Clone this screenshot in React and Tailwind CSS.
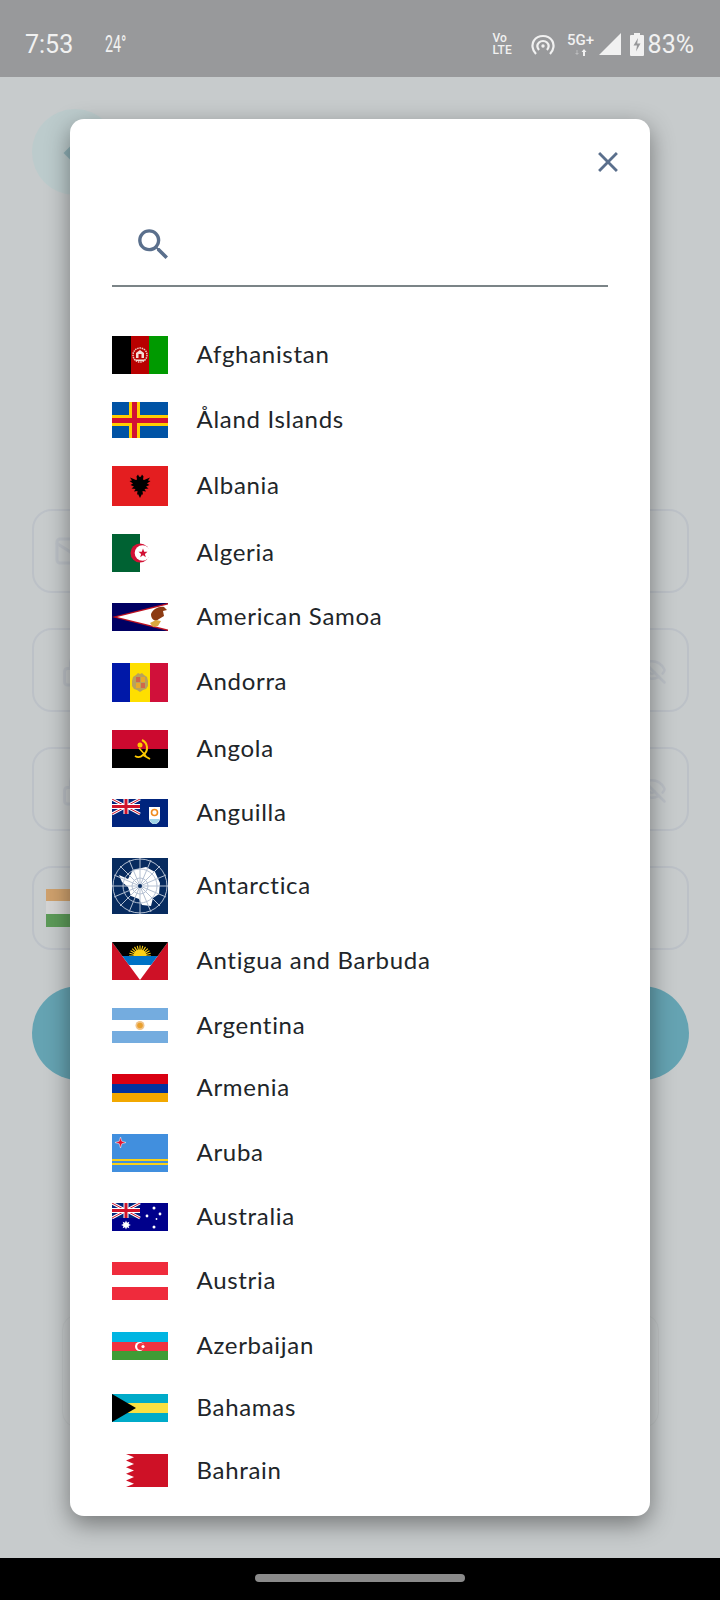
import React from "react";
import { Mail, Lock, EyeOff } from "lucide-react";

function Svg({ w = 56, h, children }) {
  return (
    <svg width={w} height={h} viewBox={`0 0 ${w} ${h}`} className="block shrink-0">
      {children}
    </svg>
  );
}

// union jack drawn in a 28x15 box
function Jack() {
  return (
    <g>
      <rect width="28" height="15" fill="#00247d" />
      <path d="M0 0L28 15M28 0L0 15" stroke="#fff" strokeWidth="3" />
      <path d="M0 0L28 15M28 0L0 15" stroke="#cf142b" strokeWidth="1" />
      <path d="M14 0V15M0 7.5H28" stroke="#fff" strokeWidth="5" />
      <path d="M14 0V15M0 7.5H28" stroke="#cf142b" strokeWidth="3" />
    </g>
  );
}

const sunRays = Array.from({ length: 13 }, (_, i) => {
  const a = (Math.PI * i) / 12;
  return `M28 14L${(28 + Math.cos(a) * 11).toFixed(1)} ${(14 - Math.sin(a) * 10.5).toFixed(1)}`;
}).join("");

const flags = {
  Afghanistan: (
    <Svg h={38}>
      <rect width="19" height="38" fill="#000" />
      <rect x="19" width="18" height="38" fill="#b80000" />
      <rect x="37" width="19" height="38" fill="#009a00" />
      <circle cx="28" cy="19" r="7" fill="none" stroke="#eec9c2" strokeWidth="1.500" strokeDasharray="1.500 .8" />
      <path d="M24 22v-5l4-3 4 3v5z" fill="#f3dcd6" />
      <path d="M26.500 22v-4h3v4z" fill="#b80000" />
      <path d="M23.500 23.500h9v1.500h-9z" fill="#f3dcd6" />
    </Svg>
  ),
  Aland: (
    <Svg h={36}>
      <rect width="56" height="36" fill="#0053a5" />
      <rect x="17" width="11" height="36" fill="#ffce00" />
      <rect y="13" width="56" height="11" fill="#ffce00" />
      <rect x="20" width="5" height="36" fill="#d21034" />
      <rect y="16" width="56" height="5" fill="#d21034" />
    </Svg>
  ),
  Albania: (
    <Svg h={40}>
      <rect width="56" height="40" fill="#e41e20" />
      <path d="M28 32l-2-4-1 1 .5-4-3.500.5 1.500-2.500-4-.5 2.500-2-3.500-1.500 2.500-1.500-3.500-2.500 2.500-.5-2-3 6 2.500 1-.5-.5-3 1.500-2 1 2 1 .5 1-.5 1-2 1.500 2-.5 3 1 .5 6-2.500-2 3 2.500.5-3.500 2.500 2.500 1.500-3.500 1.500 2.500 2-4 .5 1.500 2.500-3.500-.5.5 4-1-1z" fill="#000" />
    </Svg>
  ),
  Algeria: (
    <Svg w={56} h={38}>
      <rect width="28" height="38" fill="#006233" />
      <circle cx="28" cy="19" r="9.500" fill="#d21034" />
      <circle cx="30.500" cy="19" r="7.800" fill="#fff" />
      <path d="M31 14.500l1.200 3.200 3.300.1-2.600 2.100.9 3.300-2.800-1.900-2.800 1.900.9-3.300-2.600-2.100 3.300-.1z" fill="#d21034" />
    </Svg>
  ),
  Samoa: (
    <Svg h={28}>
      <rect width="56" height="28" fill="#000063" />
      <path d="M56 0V28L0 14z" fill="#bd1021" />
      <path d="M56 1.500V26.500L5 14z" fill="#fff" />
      <path d="M39 11c2-5 8-8 13-7l3 3-4 1 1 5-5 3-3 2c-3-1-5-3-5-7z" fill="#8c3a12" />
      <path d="M38 20l6-3 5 1-3 5-5 1z" fill="#d9a83e" />
    </Svg>
  ),
  Andorra: (
    <Svg h={39}>
      <rect width="18" height="39" fill="#0018a8" />
      <rect x="18" width="20" height="39" fill="#fedf00" />
      <rect x="38" width="18" height="39" fill="#d0103a" />
      <path d="M21 14l3-2 2-2 2 1 2-1 2 2 3 2 1 4 0 5-2 3-3 1-3 2-3-2-3-1-2-3 0-5z" fill="#b8a25c" />
      <rect x="24" y="14" width="4" height="5" fill="#d0684a" />
      <rect x="29" y="14" width="4" height="5" fill="#e9a92a" />
      <rect x="24" y="20" width="4" height="5" fill="#e9a92a" />
      <rect x="29" y="20" width="4" height="5" fill="#d0684a" />
    </Svg>
  ),
  Angola: (
    <Svg h={38}>
      <rect width="56" height="19" fill="#cc092f" />
      <rect y="19" width="56" height="19" fill="#000" />
      <path d="M30 10c6 3 7 11 1 15" fill="none" stroke="#ffcb00" strokeWidth="2" />
      <path d="M23 26c3 2 6 1 8-1l7 4" fill="none" stroke="#ffcb00" strokeWidth="1.800" />
      <path d="M27 18l7 8" stroke="#ffcb00" strokeWidth="1.500" />
      <circle cx="28" cy="15" r="2.500" fill="#ffcb00" />
    </Svg>
  ),
  Anguilla: (
    <Svg h={28}>
      <rect width="56" height="28" fill="#00247d" />
      <Jack />
      <path d="M37 8h11v11c0 4-3 6-5.500 6S37 23 37 19z" fill="#fff" />
      <path d="M37.500 20h10c-.5 3-3 5-5 5s-4.500-2-5-5z" fill="#9fd3e6" />
      <circle cx="42.500" cy="13.500" r="3" fill="none" stroke="#f08a1c" strokeWidth="1.600" />
    </Svg>
  ),
  Antarctica: (
    <Svg h={56}>
      <rect width="56" height="56" fill="#072b5f" />
      <path d="M7 17l9 4 5-9 13-3 9 5 5 11-1 11-6 4-2 8-9-1-3-6-8-3-3-9-6-5z" fill="#fff" />
      <g fill="none" stroke="#b4c0d2" strokeWidth="1">
        <circle cx="28" cy="28" r="8" />
        <circle cx="28" cy="28" r="17" />
        <circle cx="28" cy="28" r="27" />
        <path d="M28 0V56M0 28H56M8 8L48 48M48 8L8 48M17 2L39 54M39 2L17 54M2 17L54 39M2 39L54 17" />
      </g>
      <circle cx="28" cy="28" r="2" fill="#072b5f" />
    </Svg>
  ),
  Antigua: (
    <Svg h={38}>
      <rect width="56" height="38" fill="#ce1126" />
      <path d="M0 0H56L28 38z" fill="#fff" />
      <path d="M0 0H56L45.700 14H10.300z" fill="#000" />
      <path d="M28 14m-6.500 0a6.500 6.500 0 0 1 13 0z" fill="#fcd116" />
      <path d={sunRays} stroke="#fcd116" strokeWidth="1.100" />
      <path d="M10.300 14H45.700L39 23H17z" fill="#0072c6" />
    </Svg>
  ),
  Argentina: (
    <Svg h={35}>
      <rect width="56" height="35" fill="#74acdf" />
      <rect y="12" width="56" height="11" fill="#fff" />
      <circle cx="28" cy="17.500" r="4.500" fill="#f0c48a" />
      <circle cx="28" cy="17.500" r="2.800" fill="#e9a02e" />
    </Svg>
  ),
  Armenia: (
    <Svg h={28}>
      <rect width="56" height="10" fill="#d90012" />
      <rect y="10" width="56" height="9" fill="#0033a0" />
      <rect y="19" width="56" height="9" fill="#f2a800" />
    </Svg>
  ),
  Aruba: (
    <Svg h={38}>
      <rect width="56" height="38" fill="#418fde" />
      <rect y="25" width="56" height="2" fill="#fbd116" />
      <rect y="29" width="56" height="2" fill="#fbd116" />
      <path d="M8.500 3l1.300 4.200 4.200 1.300-4.200 1.300-1.300 4.200-1.300-4.200L3 8.500l4.200-1.300z" fill="#e8112d" stroke="#fff" strokeWidth="0.500" />
    </Svg>
  ),
  Australia: (
    <Svg h={28}>
      <rect width="56" height="28" fill="#00008b" />
      <Jack />
      <path d="M14 17.500l1 2.200 2.300-1-.7 2.400 2.300.9-2.300.9.7 2.400-2.300-1-1 2.200-1-2.200-2.300 1 .7-2.400-2.300-.9 2.300-.9-.7-2.400 2.300 1z" fill="#fff" />
      <circle cx="42" cy="5" r="1.500" fill="#fff" />
      <circle cx="35" cy="13" r="1.400" fill="#fff" />
      <circle cx="48" cy="11" r="1.400" fill="#fff" />
      <circle cx="44.500" cy="16" r="0.900" fill="#fff" />
      <circle cx="42" cy="24" r="1.500" fill="#fff" />
    </Svg>
  ),
  Austria: (
    <Svg h={38}>
      <rect width="56" height="13" fill="#ef2b3c" />
      <rect y="25" width="56" height="13" fill="#ef2b3c" />
    </Svg>
  ),
  Azerbaijan: (
    <Svg h={28}>
      <rect width="56" height="10" fill="#00b5e2" />
      <rect y="10" width="56" height="9" fill="#ef3340" />
      <rect y="19" width="56" height="9" fill="#3f9c35" />
      <circle cx="27.500" cy="14.500" r="4.500" fill="#fff" />
      <circle cx="28.800" cy="14.500" r="3.600" fill="#ef3340" />
      <circle cx="31" cy="14.500" r="1.600" fill="#fff" />
    </Svg>
  ),
  Bahamas: (
    <Svg h={28}>
      <rect width="56" height="28" fill="#00abc9" />
      <rect y="9" width="56" height="10" fill="#fae042" />
      <path d="M0 0L24 14 0 28z" fill="#000" />
    </Svg>
  ),
  Bahrain: (
    <Svg h={33}>
      <path d="M14 0H56V33H14l8-3.300-8-3.300 8-3.300-8-3.300 8-3.300-8-3.300 8-3.300-8-3.300 8-3.300z" fill="#ce1126" />
    </Svg>
  ),
};

const countries = [
  ["Afghanistan", "Afghanistan"],
  ["Åland Islands", "Aland"],
  ["Albania", "Albania"],
  ["Algeria", "Algeria"],
  ["American Samoa", "Samoa"],
  ["Andorra", "Andorra"],
  ["Angola", "Angola"],
  ["Anguilla", "Anguilla"],
  ["Antarctica", "Antarctica"],
  ["Antigua and Barbuda", "Antigua"],
  ["Argentina", "Argentina"],
  ["Armenia", "Armenia"],
  ["Aruba", "Aruba"],
  ["Australia", "Australia"],
  ["Austria", "Austria"],
  ["Azerbaijan", "Azerbaijan"],
  ["Bahamas", "Bahamas"],
  ["Bahrain", "Bahrain"],
];

function StatusBar() {
  return (
    <div className="flex h-[77px] shrink-0 items-center bg-[#98999b] pl-[25px] pr-[26px] pt-[11px] font-[family-name:Roboto,sans-serif] text-[#f1f1f1]">
      <span className="text-[25px] leading-none">7:53</span>
      <span className="ml-[32px] w-[24px] origin-left scale-x-[0.62] text-[23px] leading-none">24°</span>
      <div className="ml-auto flex items-center">
        <div className="mr-[14px] flex w-[24px] flex-col text-[12px] font-medium leading-[12px]">
          <span>Vo</span>
          <span>LTE</span>
        </div>
        <svg width="24" height="21" viewBox="0 0 24 21" fill="none" stroke="#f1f1f1" strokeWidth="2.200" className="mr-[12px]">
          <path d="M5 20C1 16 .5 10 3 6.500c4-6 14-6 18 0 2.500 3.500 2 9.500-2 13.500" />
          <path d="M8 16c-2-2.500-2-5.500 0-7.500 2-2 6-2 8 0 2 2 2 5 0 7.500" />
          <circle cx="12" cy="12" r="1.700" fill="#f1f1f1" stroke="none" />
        </svg>
        <div className="mr-[4px] flex w-[28px] flex-col items-center">
          <span className="text-[15px] font-medium leading-[15px]">5G+</span>
          <svg width="14" height="7" viewBox="0 0 14 7" fill="#f1f1f1" className="mt-[1px]">
            <path d="M3 6L1 4h1.500V1h1v3H5z" opacity=".4" />
            <path d="M10 0l2.500 3H11v4H9V3H7.500z" />
          </svg>
        </div>
        <svg width="22" height="22" viewBox="0 0 22 22" fill="#f1f1f1" className="mr-[9px]">
          <path d="M22 0V22H0z" />
        </svg>
        <svg width="14" height="23" viewBox="0 0 14 23" className="mr-[4px]">
          <path d="M4 0h6v2h3a1 1 0 0 1 1 1v19a1 1 0 0 1-1 1H1a1 1 0 0 1-1-1V3a1 1 0 0 1 1-1h3z" fill="#f1f1f1" />
          <path d="M8 5L3.500 12.500H7l-1 6 4.500-8H7.200z" fill="#98999b" />
        </svg>
        <span className="text-[25px] leading-none">83%</span>
      </div>
    </div>
  );
}

// the form behind the dialog, dimmed
function Backdrop() {
  return (
    <div className="flex flex-1 flex-col bg-[#c7cbcc] pl-[32px] pr-[31px] pt-[32px]">
      <div className="flex h-[86px] w-[86px] items-center justify-center rounded-full bg-[#bccbcc]">
        <span className="mr-[6px] mt-[2px] h-[12px] w-[12px] rotate-45 bg-[#8fb0b6]" />
      </div>
      <div className="mt-[314px] flex flex-col gap-[35px]">
        <div className="flex h-[84px] items-center rounded-[20px] border-2 border-[#bcc1c7] pl-[20px]">
          <Mail size={36} strokeWidth={2} className="text-[#bcc1c7]" />
        </div>
        <div className="flex h-[84px] items-center justify-between rounded-[20px] border-2 border-[#bcc1c7] pl-[26px] pr-[20px]">
          <Lock size={36} strokeWidth={2} className="text-[#bcc1c7]" />
          <EyeOff size={30} strokeWidth={2} className="text-[#bcc1c7]" />
        </div>
        <div className="flex h-[84px] items-center justify-between rounded-[20px] border-2 border-[#bcc1c7] pl-[26px] pr-[20px]">
          <Lock size={36} strokeWidth={2} className="text-[#bcc1c7]" />
          <EyeOff size={30} strokeWidth={2} className="text-[#bcc1c7]" />
        </div>
        <div className="flex h-[84px] items-center rounded-[20px] border-2 border-[#bcc1c7] pl-[12px]">
          <div className="flex w-[40px] flex-col">
            <span className="h-[12px] bg-[#cfa16d]" />
            <span className="h-[13px] bg-[#d5d5d5]" />
            <span className="h-[13px] bg-[#5c9a58]" />
          </div>
        </div>
      </div>
      <div className="mt-[36px] h-[94px] rounded-full bg-[#65a3b2]" />
      <div className="mx-[30px] mt-[234px] h-[114px] rounded-[16px] border border-[#c1c5c6]" />
    </div>
  );
}

export default function App() {
  return (
    <div className="relative flex h-[1600px] w-[720px] flex-col overflow-hidden font-[family-name:Lato,sans-serif]">
      <StatusBar />
      <Backdrop />
      <div className="flex h-[42px] shrink-0 items-center justify-center bg-black pb-[2px]">
        <div className="h-[8px] w-[210px] rounded-full bg-[#8a8a8a]" />
      </div>

      <div className="absolute left-[70px] top-[119px] h-[1397px] w-[580px] rounded-[14px] bg-white shadow-[0_8px_24px_rgba(0,0,0,0.42)]">
        <div className="flex h-[86px] justify-end pr-[25px] pt-[26px]">
          <svg width="34" height="34" viewBox="0 0 24 24" fill="#5a6f8c">
            <path d="M19 6.410L17.590 5 12 10.590 6.410 5 5 6.410 10.590 12 5 17.590 6.410 19 12 13.410 17.590 19 19 17.590 13.410 12z" />
          </svg>
        </div>
        <div className="mx-[42px] flex h-[82px] items-start border-b-2 border-[#7b8487] pl-[21px] pt-[19px]">
          <svg width="41" height="41" viewBox="0 0 24 24" fill="#5a6f8c">
            <path d="M15.500 14h-.790l-.280-.270A6.471 6.471 0 0 0 16 9.500 6.500 6.500 0 1 0 9.500 16c1.610 0 3.090-.590 4.230-1.570l.270.280v.790l5 4.990L20.490 19l-4.990-5zm-6 0C7.010 14 5 11.990 5 9.500S7.010 5 9.500 5 14 7.010 14 9.500 11.990 14 9.500 14z" />
          </svg>
        </div>
        <div className="mt-[35px] flex flex-col px-[42px]">
          {countries.map(([name, key]) => (
            <div key={name} className="flex min-h-[62.600px] items-center py-[14px]">
              <div className="w-[84.500px] shrink-0">{flags[key]}</div>
              <span className="pb-[2px] text-[24px] leading-[32px] tracking-[0.7px] text-[#212529]">{name}</span>
            </div>
          ))}
        </div>
      </div>
    </div>
  );
}
